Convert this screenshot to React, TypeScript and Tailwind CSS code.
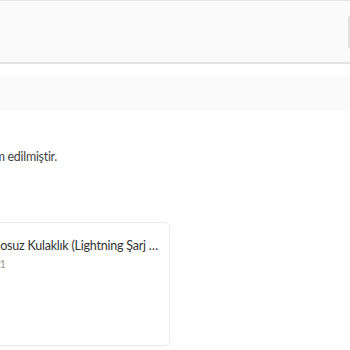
import React from "react";

export default function App() {
  return (
    <div
      className="w-[350px] h-[350px] overflow-hidden bg-white relative"
      style={{ fontFamily: "Lato, 'Noto Sans', sans-serif" }}
    >
      {/* top header bar */}
      <div className="h-[64px] bg-[#fafafa] border-t border-t-[#e6e6e6] border-b-2 border-b-[#e4e4e4] flex items-center justify-end">
        <div className="w-[2px] h-[33px] mt-[2px] border-l-2 border-[#e0e0e0] rounded-l-[3px] bg-white"></div>
      </div>

      {/* secondary band */}
      <div className="mt-[12px] h-[34px] bg-[#fafafa] shadow-[0_0_3px_rgba(0,0,0,0.02)]"></div>

      {/* message text */}
      <div className="mt-[39px] flex justify-end w-[57px]">
        <p className="whitespace-nowrap text-[12.5px] leading-[16px] tracking-[-0.3px] text-[#444]">
          Siparişiniz teslim edilmiştir.
        </p>
      </div>

      {/* product card */}
      <div className="mt-[57px] w-[170px] h-[124px] bg-white border border-[#ececec] rounded-r-[5px] border-l-0 shadow-[0_1px_2px_rgba(0,0,0,0.04)] overflow-hidden">
        <div className="pt-[15px] flex justify-end w-[158px]">
          <p className="whitespace-nowrap text-[12.5px] leading-[16px] tracking-[-0.22px] text-[#333]">
            Apple AirPods Kablosuz Kulaklık (Lightning Şarj …
          </p>
        </div>
        <div className="mt-[3px] flex justify-end w-[6px]">
          <p className="whitespace-nowrap text-[11px] leading-[13px] text-[#999]">
            Adet: 1
          </p>
        </div>
      </div>
    </div>
  );
}
